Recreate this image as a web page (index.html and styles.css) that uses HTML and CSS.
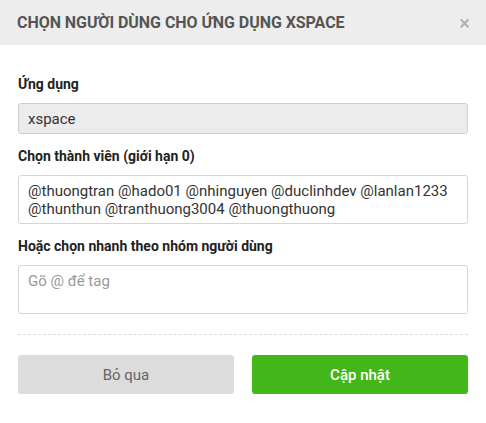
FILE: index.html
```html
<!DOCTYPE html>
<html lang="vi">
<head>
<meta charset="utf-8">
<link rel="stylesheet" href="styles.css">
</head>
<body>
<div class="modal">
  <div class="modal-header">
    <h2 class="modal-title">CHỌN NGƯỜI DÙNG CHO ỨNG DỤNG XSPACE</h2>
    <span class="close">&times;</span>
  </div>
  <div class="modal-body">
    <div class="field">
      <label class="label">Ứng dụng</label>
      <div class="input readonly">xspace</div>
    </div>
    <div class="field">
      <label class="label">Chọn thành viên (giới hạn 0)</label>
      <div class="input area">@thuongtran @hado01 @nhinguyen @duclinhdev @lanlan1233 @thunthun @tranthuong3004 @thuongthuong</div>
    </div>
    <div class="field">
      <label class="label">Hoặc chọn nhanh theo nhóm người dùng</label>
      <div class="input area placeholder">Gõ @ để tag</div>
    </div>
    <div class="divider"></div>
    <div class="actions">
      <button class="btn btn-cancel">Bỏ qua</button>
      <button class="btn btn-primary">Cập nhật</button>
    </div>
  </div>
</div>
</body>
</html>
```

FILE: styles.css
```css
* { box-sizing: border-box; }
html, body { margin: 0; padding: 0; background: #fff; }
body {
  font-family: Roboto, "Liberation Sans", Arial, sans-serif;
  color: #333;
  width: 486px;
  height: 423px;
  overflow: hidden;
}
.modal { width: 486px; }
.modal-header {
  height: 45px;
  background: #ededed;
  display: flex;
  align-items: center;
  justify-content: space-between;
  padding: 0 16px 0 17px;
}
.modal-title {
  margin: 0;
  font-size: 16px;
  font-weight: 700;
  color: #555;
  letter-spacing: -0.05px;
}
.close {
  font-size: 20px;
  color: #aaa;
  line-height: 1;
}
.modal-body {
  padding: 30px 18px 0 18px;
}
.field { margin-bottom: 13px; }
.label {
  display: block;
  font-size: 14px;
  font-weight: 700;
  color: #222;
  margin-bottom: 10px;
  line-height: 18px;
}
.input {
  border: 1px solid #d6d6d6;
  border-radius: 3px;
  font-size: 15px;
  color: #333;
  line-height: 18px;
  padding: 6px 9px;
}
.readonly {
  background: #ececec;
  border-color: #cfcfcf;
  height: 31px;
}
.area {
  height: 49px;
  padding: 6px 9px;
}
.placeholder { color: #999; }
.divider {
  border-top: 1px dashed #ddd;
  margin-top: 20px;
}
.actions {
  display: flex;
  gap: 18px;
  margin-top: 20px;
}
.btn {
  flex: 1;
  height: 39px;
  border: 0;
  border-radius: 3px;
  font-family: Roboto, "Liberation Sans", Arial, sans-serif;
  font-size: 15px;
  font-weight: 400;
}
.btn-cancel { background: #dcdcdc; color: #666; }
.btn-primary { background: #43b619; color: #fff; font-weight: 500; }
```
